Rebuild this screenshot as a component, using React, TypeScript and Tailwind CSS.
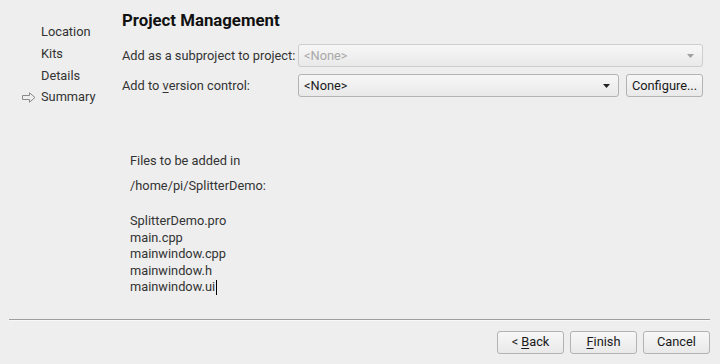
import React from 'react';

const files = ['SplitterDemo.pro', 'main.cpp', 'mainwindow.cpp', 'mainwindow.h', 'mainwindow.ui'];
const steps = ['Location', 'Kits', 'Details', 'Summary'];

const Combo: React.FC<{ value: string; disabled?: boolean; className?: string }> = ({ value, disabled, className }) => (
  <div
    className={`h-[23px] flex items-center justify-between pl-[5px] pr-[8px] rounded-[3px] border bg-gradient-to-b from-[#f7f7f7] to-[#e9e9e9] ${
      disabled ? 'border-[#cdcdcd] text-[#a8a8a8]' : 'border-[#b3b3b3] text-[#1a1a1a]'
    } ${className ?? ''}`}
  >
    <span>{value}</span>
    <svg width="7" height="4" viewBox="0 0 7 4">
      <path d="M0 0h7L3.5 4z" fill={disabled ? '#a0a0a0' : '#222'} />
    </svg>
  </div>
);

const Btn: React.FC<{ children: React.ReactNode }> = ({ children }) => (
  <button className="w-[67px] h-[23px] rounded-[3px] border border-[#b3b3b3] bg-gradient-to-b from-[#f7f7f7] to-[#e9e9e9] text-[#1a1a1a] flex items-center justify-center">
    {children}
  </button>
);

export default function App() {
  return (
    <div className="w-[720px] h-[364px] bg-[#eeeeee] text-[12.8px] text-[#333] flex flex-col overflow-hidden" style={{ fontFamily: 'Roboto, "Liberation Sans", sans-serif' }}>
      <div className="flex flex-1">
        {/* Steps */}
        <div className="w-[122px] shrink-0 pt-[23.5px] flex flex-col gap-[4.7px]">
          {steps.map((s, i) => (
            <div key={s} className="h-[17px] flex items-center">
              <div className="w-[41px] flex items-center justify-end pr-[5px]">
                {i === 3 && (
                  <svg width="14" height="11" viewBox="0 0 14 11">
                    <path d="M0.5 3.5H7.5V0.8L13 5.5L7.5 10.2V7.5H0.5Z" fill="none" stroke="#8a8a8a" strokeWidth="1" strokeLinejoin="round" />
                  </svg>
                )}
              </div>
              <span>{s}</span>
            </div>
          ))}
        </div>

        {/* Page */}
        <div className="flex-1 min-w-0 pr-[17px] pt-[10px]">
          <h1 className="text-[16.8px] font-bold text-[#111] leading-[20px]">Project Management</h1>
          <div className="mt-[14px] flex items-center">
            <span className="w-[176px] shrink-0 whitespace-nowrap">Add as a subproject to project:</span>
            <Combo value="<None>" disabled className="flex-1" />
          </div>
          <div className="mt-[7px] flex items-center">
            <span className="w-[176px] shrink-0 whitespace-nowrap">
              Add to <span className="underline underline-offset-2">v</span>ersion control:
            </span>
            <Combo value="<None>" className="flex-1" />
            <button className="ml-[7px] w-[77px] shrink-0 h-[23px] rounded-[3px] border border-[#b3b3b3] bg-gradient-to-b from-[#f7f7f7] to-[#e9e9e9] text-[#1a1a1a]">
              Configure...
            </button>
          </div>

          <div className="mt-[56px] ml-[8px] leading-[16.5px]">
            <p>Files to be added in</p>
            <p className="mt-[8px]">/home/pi/SplitterDemo:</p>
            <div className="mt-[19px]">
              {files.map((f, i) => (
                <p key={f}>
                  {f}
                  {i === files.length - 1 && <span className="inline-block w-px h-[15px] bg-black align-middle ml-px" />}
                </p>
              ))}
            </div>
          </div>
        </div>
      </div>

      {/* Footer */}
      <div className="ml-[9px] mr-[10px] h-[2px] border-t border-[#9e9e9e] border-b border-b-[#f8f8f8]" />
      <div className="h-[43px] flex items-center justify-end gap-[6px] pr-[10px] pb-[1px]">
        <Btn>
          &lt; <span className="underline underline-offset-2 ml-[3px]">B</span>ack
        </Btn>
        <Btn>
          <span className="underline underline-offset-2">F</span>inish
        </Btn>
        <Btn>Cancel</Btn>
      </div>
    </div>
  );
}
